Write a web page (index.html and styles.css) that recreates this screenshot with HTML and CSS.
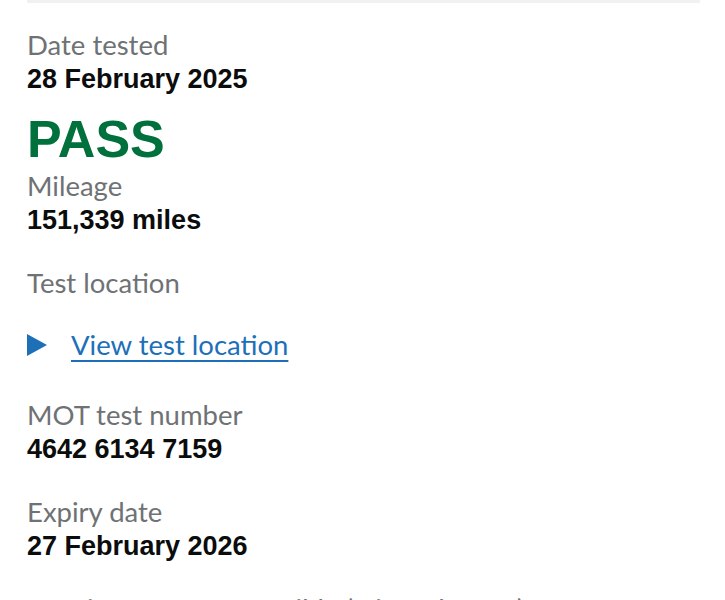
FILE: index.html
```html
<!DOCTYPE html>
<html lang="en">
<head>
    <meta charset="UTF-8">
    <meta name="viewport" content="width=device-width, initial-scale=1.0">
    <title>MOT history</title>
    <link rel="stylesheet" href="styles.css">
</head>
<body>
    <div class="card-edge"></div>

    <div class="test-result">
        <div class="item item-tight">
            <p class="label">Date tested</p>
            <p class="value">28 February 2025</p>
        </div>

        <p class="status">PASS</p>

        <div class="item">
            <p class="label">Mileage</p>
            <p class="value">151,339 miles</p>
        </div>

        <div class="item">
            <p class="label">Test location</p>
            <details class="location">
                <summary>
                    <svg class="arrow" width="20" height="22" viewBox="0 0 20 22" aria-hidden="true">
                        <polygon points="0,0 20,11 0,22" fill="#1d70b8"/>
                    </svg>
                    <span class="link">View test location</span>
                </summary>
            </details>
        </div>

        <div class="item">
            <p class="label">MOT test number</p>
            <p class="value">4642 6134 7159</p>
        </div>

        <div class="item">
            <p class="label">Expiry date</p>
            <p class="value">27 February 2026</p>
        </div>

        <h2 class="defects">Repair as soon as possible (minor defects)</h2>
    </div>
</body>
</html>
```

FILE: styles.css
```css
:root {
    --label-color: #6f7275;
    --text-color: #0b0c0c;
    --pass-color: #00703c;
    --link-color: #1d70b8;
    --edge-color: #f1f1f0;
}

body {
    margin: 0;
    padding: 0;
    background-color: #ffffff;
    font-family: 'Liberation Sans', Arial, sans-serif;
    color: var(--text-color);
}

.card-edge {
    height: 3px;
    margin: 0 25px 0 27px;
    background-color: var(--edge-color);
}

.test-result {
    padding: 25px 27px 0;
}

p {
    margin: 0;
}

.item {
    margin-bottom: 29px;
}

.item-tight {
    margin-bottom: 17px;
}

.label {
    font-family: 'Lato', sans-serif;
    font-size: 27.5px;
    line-height: 34px;
    color: var(--label-color);
}

.value {
    font-size: 27px;
    line-height: 34px;
    font-weight: bold;
}

.status {
    font-size: 52px;
    line-height: 52px;
    font-weight: bold;
    color: var(--pass-color);
    margin-bottom: 4px;
}

/* Details toggle */
.location {
    margin-top: 28px;
    margin-bottom: 36px;
}

.location summary {
    list-style: none;
    display: flex;
    align-items: center;
    gap: 24px;
    cursor: pointer;
}

.location summary::-webkit-details-marker {
    display: none;
}

.arrow {
    flex-shrink: 0;
}

.link {
    font-family: 'Lato', sans-serif;
    font-size: 27.5px;
    line-height: 34px;
    color: var(--link-color);
    text-decoration: underline;
    text-decoration-thickness: 2px;
    text-underline-offset: 5px;
}

.defects {
    margin: 24px 0 0;
    font-family: 'Lato', sans-serif;
    font-size: 27.5px;
    line-height: 34px;
    font-weight: normal;
    color: var(--label-color);
}
```
